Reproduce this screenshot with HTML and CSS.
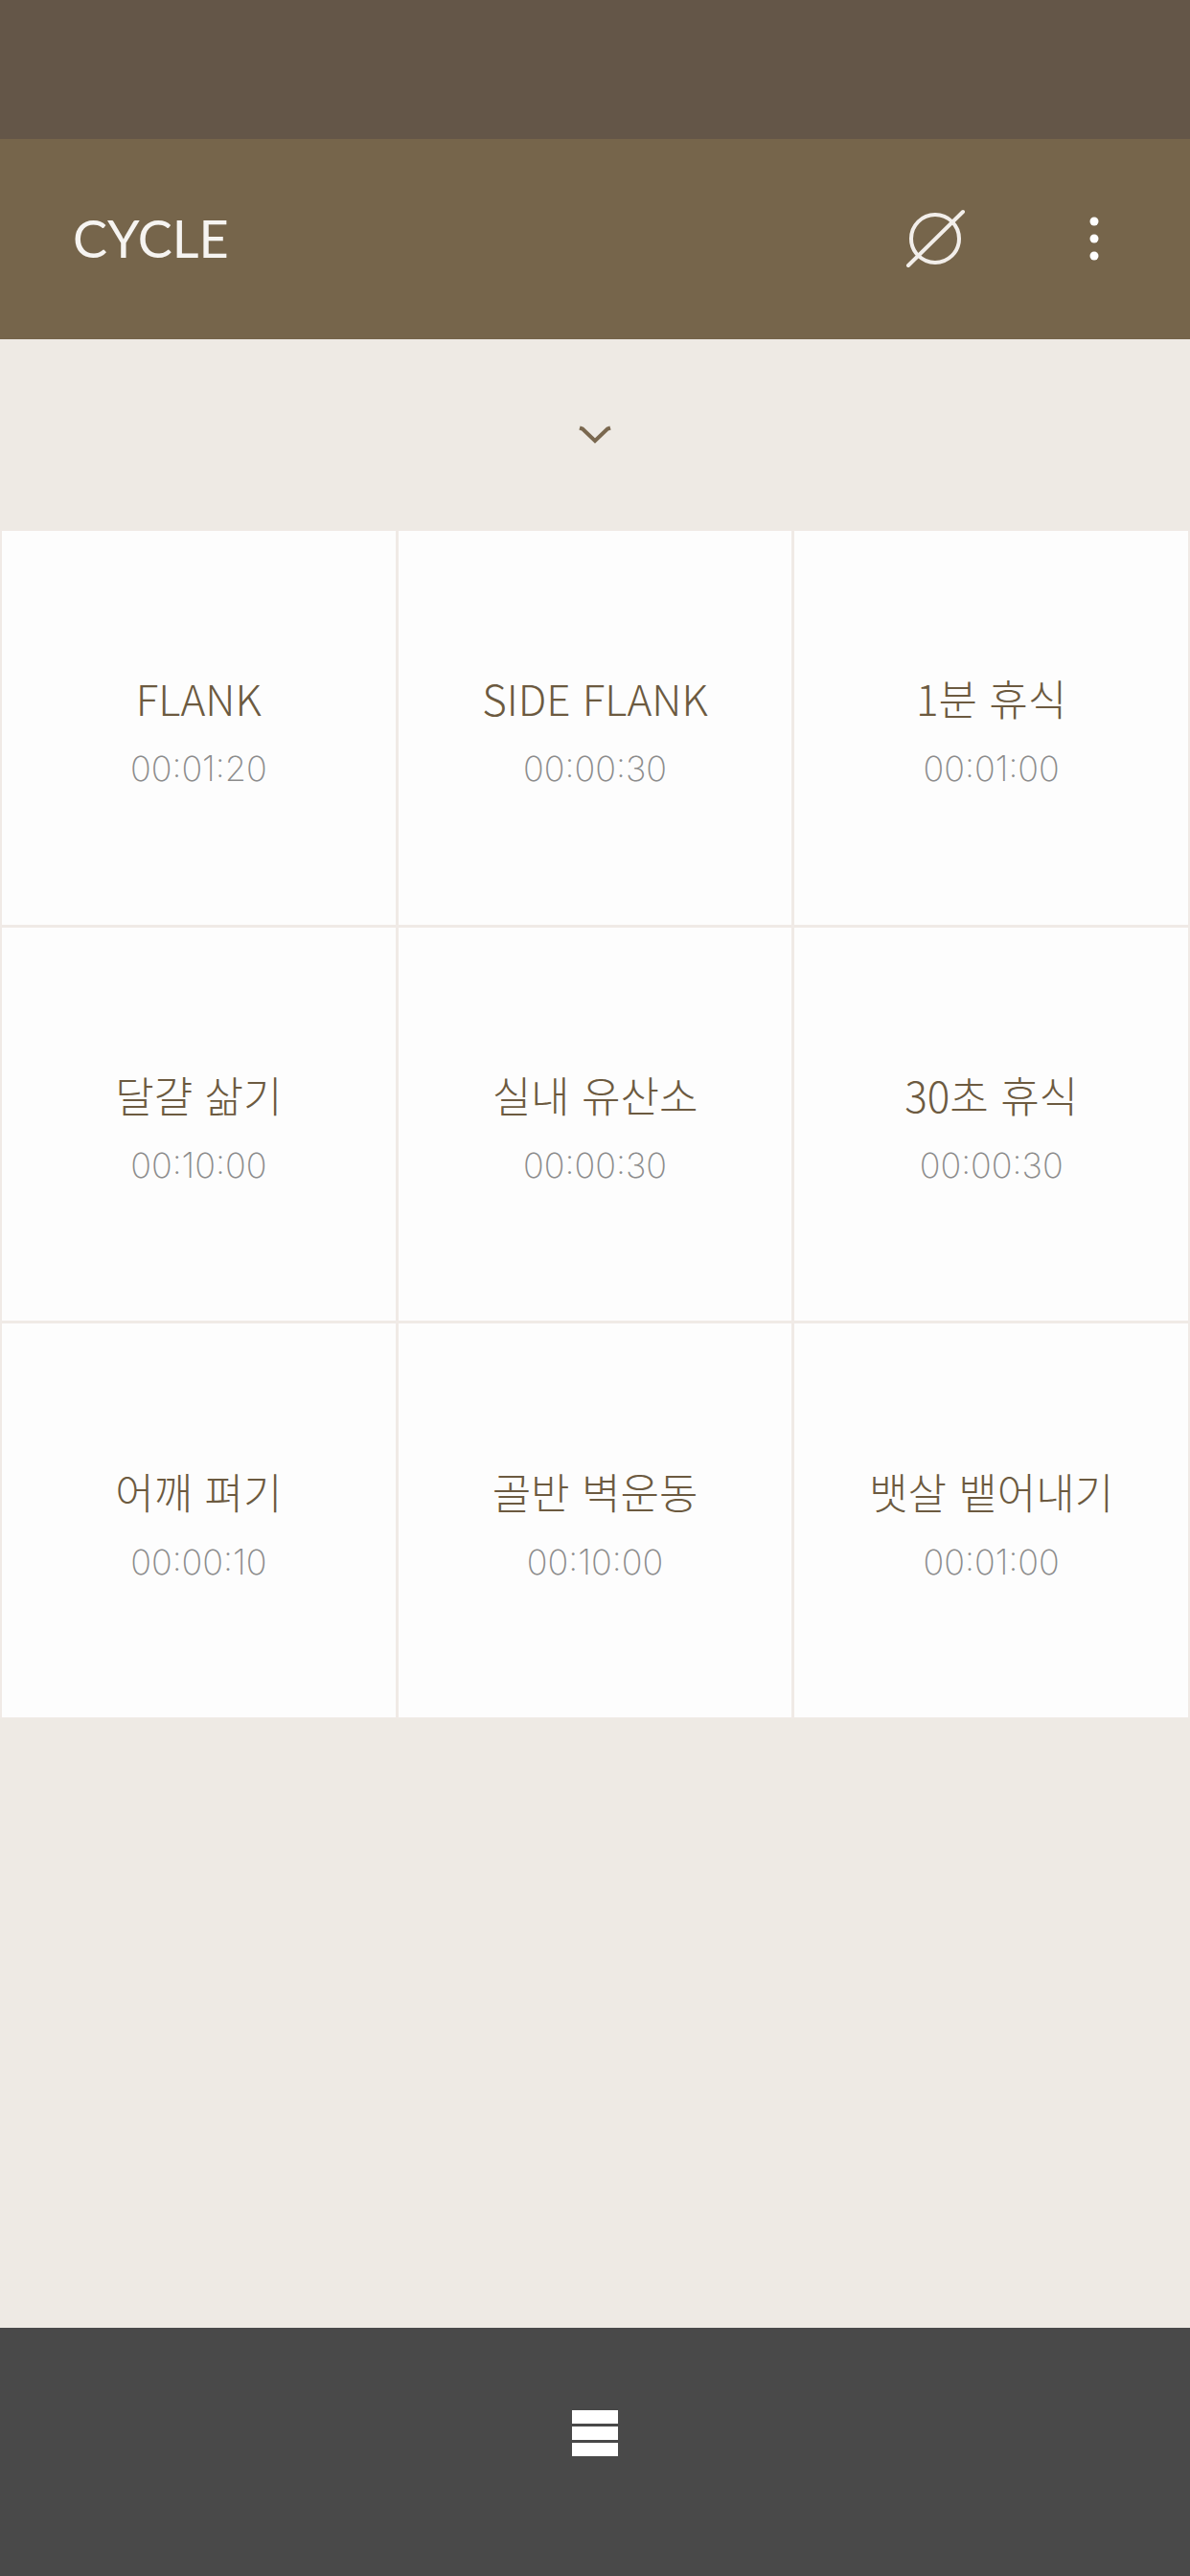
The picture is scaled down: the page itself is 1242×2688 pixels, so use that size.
FILE: index.html
```html
<!DOCTYPE html>
<html lang="ko">
<head>
  <meta charset="UTF-8" />
  <meta name="viewport" content="width=device-width, initial-scale=1" />
  <title>CYCLE</title>
  <link rel="stylesheet" href="styles.css">
</head>
<body>
  <header>
    <h1>CYCLE</h1>
    <div class="actions">
      <button type="button" class="icon-btn" aria-label="Clear">
        <svg width="64" height="64" viewBox="0 0 64 64" fill="none" stroke="#f2eeea" stroke-linecap="round">
          <circle cx="32" cy="32" r="25" stroke-width="4" />
          <path d="M4 60L61 4" stroke-width="4" />
        </svg>
      </button>
      <button type="button" class="icon-btn" aria-label="More">
        <svg width="64" height="64" viewBox="0 0 64 64" fill="#fff">
          <circle cx="32" cy="14" r="4.5" />
          <circle cx="32" cy="32" r="4.5" />
          <circle cx="32" cy="50" r="4.5" />
        </svg>
      </button>
    </div>
  </header>

  <button type="button" class="expand" aria-label="Expand">
    <svg width="36" height="20" viewBox="0 0 36 20" fill="none" stroke="#7a684f" stroke-width="4">
      <path d="M2 2.5L5 3.5L18 16L31 3.5L34 2.5" />
    </svg>
  </button>

  <main class="grid">
    <button type="button" class="card"><span class="name">FLANK</span><span class="time">00:01:20</span></button>
    <button type="button" class="card"><span class="name">SIDE FLANK</span><span class="time">00:00:30</span></button>
    <button type="button" class="card"><span class="name">1분 휴식</span><span class="time">00:01:00</span></button>
    <button type="button" class="card"><span class="name">달걀 삶기</span><span class="time">00:10:00</span></button>
    <button type="button" class="card"><span class="name">실내 유산소</span><span class="time">00:00:30</span></button>
    <button type="button" class="card"><span class="name">30초 휴식</span><span class="time">00:00:30</span></button>
    <button type="button" class="card"><span class="name">어깨 펴기</span><span class="time">00:00:10</span></button>
    <button type="button" class="card"><span class="name">골반 벽운동</span><span class="time">00:10:00</span></button>
    <button type="button" class="card"><span class="name">뱃살 뱉어내기</span><span class="time">00:01:00</span></button>
  </main>

  <footer>
    <button type="button" class="icon-btn" aria-label="List">
      <svg width="48" height="48" viewBox="0 0 48 48" fill="#fff">
        <rect width="48" height="14" />
        <rect y="17" width="48" height="14" />
        <rect y="34" width="48" height="14" />
      </svg>
    </button>
  </footer>
</body>
</html>
```

FILE: styles.css
```css
* {
  box-sizing: border-box;
}
body {
  margin: 0;
  min-height: 100vh;
  display: flex;
  flex-direction: column;
  background-color: #eeeae4;
  border-top: 145px solid #645648;
  font-family: "Noto Sans CJK KR", sans-serif;
}
button {
  border: none;
  padding: 0;
  background: none;
  font-family: inherit;
  cursor: pointer;
}
svg {
  display: block;
}
header {
  display: flex;
  justify-content: space-between;
  align-items: center;
  height: 209px;
  padding: 0 68px 2px 76px;
  background-color: #76654b;
}
h1 {
  margin: 0;
  color: #f6f4f1;
  font-family: Lato, sans-serif;
  font-size: 54px;
  font-weight: 400;
}
.actions {
  display: flex;
  gap: 102px;
}
.expand {
  display: flex;
  justify-content: center;
  align-items: center;
  height: 199px;
}
.grid {
  display: grid;
  grid-template-columns: repeat(3, 1fr);
  gap: 3px;
  padding: 1px 2px;
  background-color: #f0eae6;
}
.card {
  display: flex;
  flex-direction: column;
  justify-content: center;
  align-items: center;
  gap: 12px;
  aspect-ratio: 1;
  padding-top: 14px;
  background-color: #fdfdfd;
}
.name {
  color: #6c5a40;
  font-size: 44px;
  font-weight: 300;
  line-height: 60px;
}
.time {
  color: #8c8c8c;
  font-family: Inter, sans-serif;
  font-size: 36px;
  font-weight: 200;
  line-height: 64px;
}
footer {
  display: flex;
  justify-content: center;
  height: 259px;
  margin-top: auto;
  padding-bottom: 40px;
  background-color: #494949;
}
```
